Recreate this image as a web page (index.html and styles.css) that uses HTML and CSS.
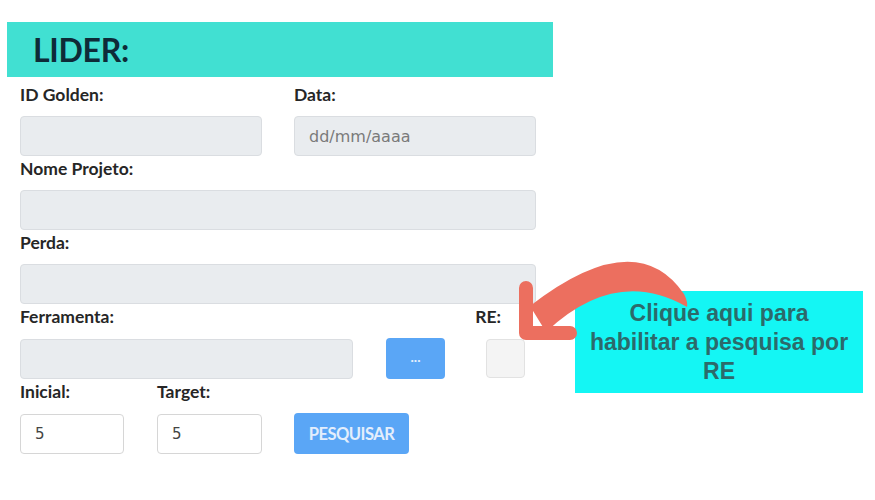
FILE: index.html
```html
<!DOCTYPE html>
<html lang="pt">
<head>
<meta charset="utf-8">
<title>Lider</title>
<link rel="stylesheet" href="styles.css">
</head>
<body>
<div class="page">
  <div class="header"><h1>LIDER:</h1></div>
  <form class="form">
    <div class="row two">
      <div class="field">
        <label class="lbl">ID Golden:</label>
        <div class="input gray"></div>
      </div>
      <div class="field">
        <label class="lbl">Data:</label>
        <div class="input gray ph">dd/mm/aaaa</div>
      </div>
    </div>
    <div class="field">
      <label class="lbl">Nome Projeto:</label>
      <div class="input gray"></div>
    </div>
    <div class="field">
      <label class="lbl">Perda:</label>
      <div class="input gray"></div>
    </div>
    <div class="lblrow">
      <label class="lbl">Ferramenta:</label>
      <label class="lbl re-lbl">RE:</label>
    </div>
    <div class="ctrlrow">
      <div class="input gray ferr"></div>
      <div class="btn dots">...</div>
      <div class="check"></div>
    </div>
    <div class="lblrow">
      <label class="lbl ini-lbl">Inicial:</label>
      <label class="lbl">Target:</label>
    </div>
    <div class="ctrlrow">
      <div class="input white small">5</div>
      <div class="input white small tgt">5</div>
      <div class="btn search">PESQUISAR</div>
    </div>
  </form>
  <div class="callout">Clique aqui para<br>habilitar a pesquisa por<br>RE</div>
  <svg class="arrow" width="200" height="100" viewBox="0 0 200 100">
    <path d="M30 56 Q136 -26 184 44 Q188 52 187 57 Q116 16 46 82 Z" fill="#ec6f5f"/>
    <polyline points="26,38 26,83 70,83" fill="none" stroke="#ec6f5f" stroke-width="14" stroke-linecap="round" stroke-linejoin="round"/>
  </svg>
</div>
</body>
</html>
```

FILE: styles.css
```css
* { box-sizing: border-box; }
html, body { margin: 0; padding: 0; background: #fff; }
body { font-family: Lato, "Open Sans", sans-serif; color: #2b2b2b; }
.page { position: relative; width: 875px; height: 500px; padding-top: 22px; }
.header {
  margin-left: 7px;
  width: 546px;
  height: 55px;
  background: #41e0d2;
  display: flex;
  align-items: center;
  padding-left: 26px;
}
.header h1 { margin: 0; font-size: 32px; font-weight: 700; color: #0e2b38; letter-spacing: -0.3px; }
.form { margin-left: 20px; width: 516px; display: flex; flex-direction: column; padding-top: 5px; }
.row.two { display: flex; gap: 32px; }
.row.two .field { flex: 1; }
.field { display: flex; flex-direction: column; }
.lbl { height: 34px; display: block; padding-top: 2px; line-height: 21px; font-weight: 700; font-size: 17.5px; color: #262626; letter-spacing: 0; }
.input { height: 40px; border-radius: 4px; border: 1px solid #dadde1; font-size: 16px; display: flex; align-items: center; padding-left: 14px; }
.input.gray { background: #e9ecef; }
.input.ph { color: #7a7a7a; font-family: "DejaVu Sans", sans-serif; font-size: 16px; }
.input.white { background: #fff; border-color: #d6d6d6; color: #444; font-family: "DejaVu Sans", sans-serif; font-size: 15px; }
.lblrow { display: flex; }
.re-lbl { margin-left: auto; margin-right: 35px; }
.ini-lbl { width: 137px; }
.ctrlrow { display: flex; align-items: center; }
.ferr { width: 333px; }
.btn { background: #5aa6f6; border-radius: 4px; height: 41px; display: flex; align-items: center; justify-content: center; color: #e6f0fd; font-weight: 700; }
.dots { width: 59px; margin-left: 33px; font-size: 14px; padding-bottom: 4px; }
.check { width: 39px; height: 39px; margin-left: 41px; background: #f4f4f4; border: 1px solid #e2e2e2; border-radius: 4px; }
.small { width: 104px; }
.tgt { margin-left: 33px; width: 105px; }
.search { width: 115px; margin-left: 32px; font-size: 16.5px; letter-spacing: -0.5px; color: #e3eefc; }
.callout {
  position: absolute;
  left: 575px;
  top: 291px;
  width: 288px;
  height: 102px;
  background: #14f6f4;
  color: #2c6a6b;
  font-family: "Liberation Sans", Arial, sans-serif;
  font-weight: 700;
  font-size: 23px;
  line-height: 29px;
  text-align: center;
  padding-top: 8px;
}
.arrow { position: absolute; left: 500px; top: 250px; }
```
